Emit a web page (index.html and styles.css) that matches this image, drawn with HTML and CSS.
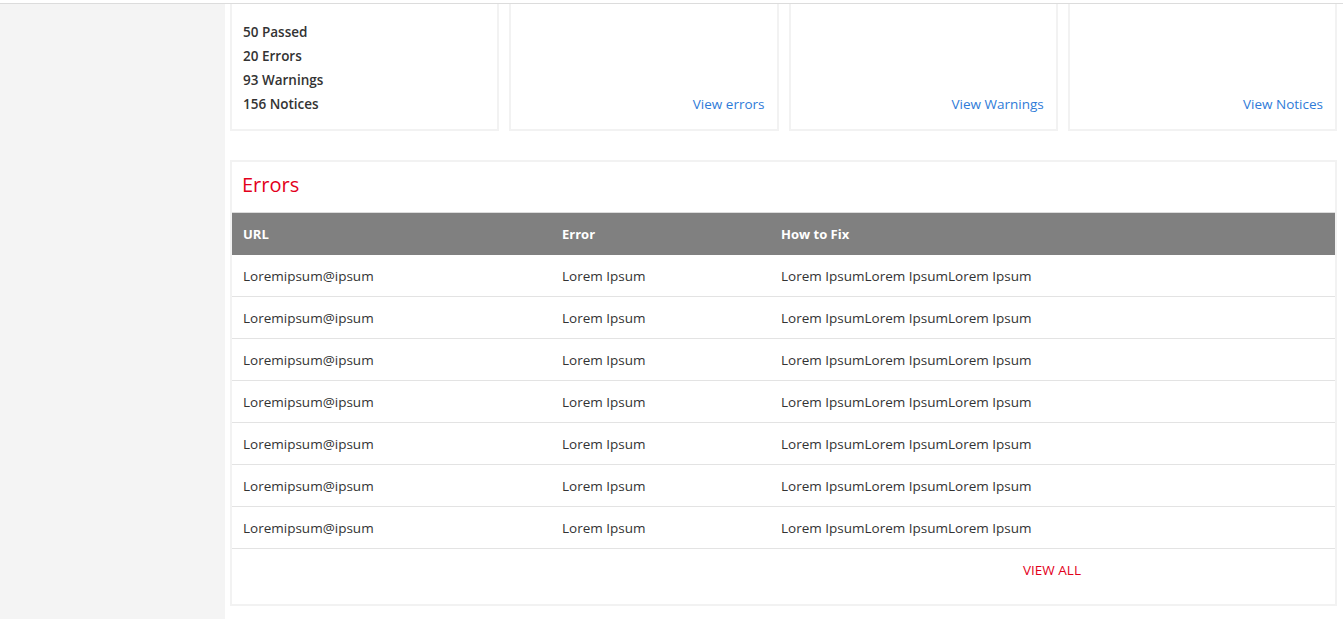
FILE: index.html
```html
<!DOCTYPE html>
<html lang="en">
<head>
<meta charset="utf-8">
<title>Report</title>
<link rel="stylesheet" href="styles.css">
</head>
<body>
<div class="topbar"></div>
<div class="layout">
  <aside class="sidebar"></aside>
  <main class="main">
    <section class="cards">
      <div class="card stats">
        <div class="stat">50 Passed</div>
        <div class="stat">20 Errors</div>
        <div class="stat">93 Warnings</div>
        <div class="stat">156 Notices</div>
      </div>
      <div class="card link-card"><a class="card-link" href="#">View errors</a></div>
      <div class="card link-card"><a class="card-link" href="#">View Warnings</a></div>
      <div class="card link-card"><a class="card-link" href="#">View Notices</a></div>
    </section>
    <section class="panel">
      <h2 class="panel-title">Errors</h2>
      <table class="table">
        <colgroup><col class="c-url"><col class="c-err"><col></colgroup>
        <thead>
          <tr><th>URL</th><th>Error</th><th>How to Fix</th></tr>
        </thead>
        <tbody>
          <tr><td>Loremipsum@ipsum</td><td>Lorem Ipsum</td><td>Lorem IpsumLorem IpsumLorem Ipsum</td></tr>
          <tr><td>Loremipsum@ipsum</td><td>Lorem Ipsum</td><td>Lorem IpsumLorem IpsumLorem Ipsum</td></tr>
          <tr><td>Loremipsum@ipsum</td><td>Lorem Ipsum</td><td>Lorem IpsumLorem IpsumLorem Ipsum</td></tr>
          <tr><td>Loremipsum@ipsum</td><td>Lorem Ipsum</td><td>Lorem IpsumLorem IpsumLorem Ipsum</td></tr>
          <tr><td>Loremipsum@ipsum</td><td>Lorem Ipsum</td><td>Lorem IpsumLorem IpsumLorem Ipsum</td></tr>
          <tr><td>Loremipsum@ipsum</td><td>Lorem Ipsum</td><td>Lorem IpsumLorem IpsumLorem Ipsum</td></tr>
          <tr><td>Loremipsum@ipsum</td><td>Lorem Ipsum</td><td>Lorem IpsumLorem IpsumLorem Ipsum</td></tr>
        </tbody>
      </table>
      <div class="panel-footer"><a class="view-all" href="#">VIEW ALL</a></div>
    </section>
  </main>
</div>
</body>
</html>
```

FILE: styles.css
```css
* { box-sizing: border-box; }
html, body { margin: 0; padding: 0; background: #fff; }
body {
  font-family: "Open Sans", "Noto Sans", "Liberation Sans", sans-serif;
  font-size: 13.5px;
  color: #333;
}
.topbar {
  height: 4px;
  border-bottom: 1px solid #dcdcdc;
}
.layout {
  display: flex;
  min-height: 615px;
}
.sidebar {
  width: 225px;
  flex: none;
  background: #f4f4f4;
}
.main {
  flex: 1;
  padding: 0 6px 12px 5px;
}
.cards {
  display: grid;
  grid-template-columns: repeat(4, 1fr);
  gap: 10px;
}
.card {
  border: 2px solid #f2f2f2;
  border-top: 0;
  padding: 16px 12px 13px 11px;
}
.stat {
  font-size: 13.5px;
  font-weight: 600;
  line-height: 24px;
  color: #333;
}
.link-card {
  display: flex;
  flex-direction: column;
  justify-content: flex-end;
  align-items: flex-end;
}
.card-link {
  color: #2f7bd8;
  text-decoration: none;
  line-height: 24px;
}
.panel {
  margin-top: 29px;
  border: 2px solid #f2f2f2;
}
.panel-title {
  margin: 0;
  padding: 10px 10px 14px;
  font-size: 20px;
  line-height: 26px;
  font-weight: 400;
  color: #e3001b;
}
.table {
  width: 100%;
  border-collapse: collapse;
}
.c-url { width: 319px; }
.c-err { width: 219px; }
.table th {
  background: #808080;
  color: #fff;
  font-size: 13px;
  font-weight: 700;
  text-align: left;
  height: 42px;
  padding: 0 11px;
  border-top: 1px solid #dcdcdc;
}
.table td {
  height: 42px;
  padding: 1px 11px 0;
  border-bottom: 1px solid #e3e3e3;
}
.panel-footer {
  height: 55px;
  display: flex;
  align-items: flex-start;
  padding: 11px 0 0 791px;
}
.view-all {
  color: #e3001b;
  text-decoration: none;
  font-size: 13.5px;
  line-height: 20px;
}
```
